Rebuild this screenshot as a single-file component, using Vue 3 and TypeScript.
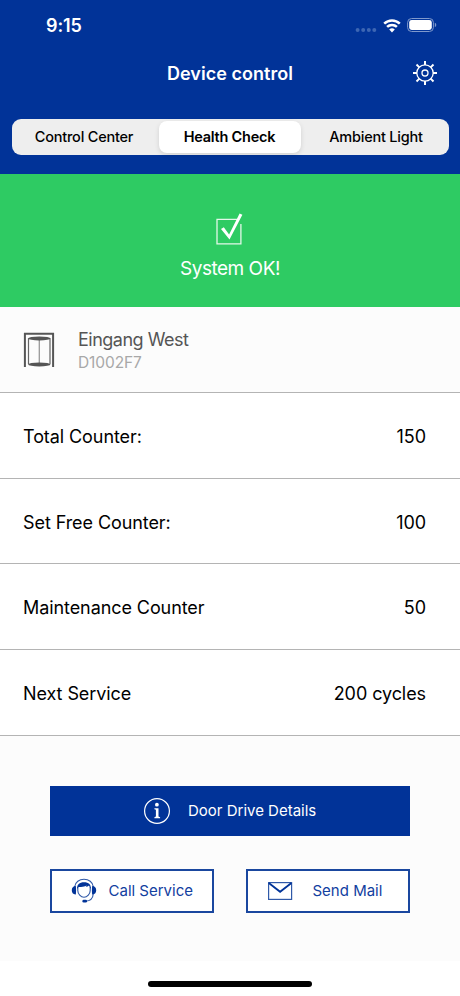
<script setup lang="ts">
import { ref } from 'vue'

interface Row {
  label: string
  value: string
}

const tabs: string[] = ['Control Center', 'Health Check', 'Ambient Light']
const active = ref<number>(1)

const rows: Row[] = [
  { label: 'Total Counter:', value: '150' },
  { label: 'Set Free Counter:', value: '100' },
  { label: 'Maintenance Counter', value: '50' },
  { label: 'Next Service', value: '200 cycles' },
]

const teeth: number[] = [0, 45, 90, 135, 180, 225, 270, 315]
</script>

<template>
  <div class="screen">
    <header class="header">
      <div class="status">
        <span class="time">9:15</span>
        <div class="indicators">
          <svg class="dots" width="22" height="6" viewBox="0 0 22 6">
            <circle cx="2.6" cy="3" r="2" />
            <circle cx="8.2" cy="3" r="2" />
            <circle cx="13.8" cy="3" r="2" />
            <circle cx="19.3" cy="3" r="2" />
          </svg>
          <svg class="wifi" width="18" height="14" viewBox="0 0 18 14">
            <path d="M1.2 4.6 A11.2 11.2 0 0 1 16.8 4.6" />
            <path d="M4.1 7.9 A7 7 0 0 1 13.9 7.9" />
            <path class="solid" d="M9 13.4 L6.2 10.5 A4 4 0 0 1 11.8 10.5 Z" />
          </svg>
          <svg class="battery" width="30" height="15" viewBox="0 0 30 15">
            <rect class="shell" x="0.6" y="0.5" width="25.8" height="13" rx="4" />
            <rect class="charge" x="2.2" y="2.1" width="22.6" height="9.8" rx="2.4" />
            <path class="cap" d="M27.8 4.8 Q29.3 5.4 29.3 7 Q29.3 8.6 27.8 9.2 Z" />
          </svg>
        </div>
      </div>
      <div class="titlebar">
        <h1 class="title">Device control</h1>
        <svg class="gear" width="26" height="26" viewBox="-13 -13 26 26">
          <circle r="8.2" />
          <circle r="3" />
          <path v-for="a in teeth" :key="a" d="M0 -8 V-12" :transform="`rotate(${a})`" />
        </svg>
      </div>
      <nav class="segments">
        <button
          v-for="(tab, i) in tabs"
          :key="tab"
          class="segment"
          :class="{ selected: i === active }"
          @click="active = i"
        >
          {{ tab }}
        </button>
      </nav>
    </header>

    <section class="banner">
      <svg class="check" width="28" height="34" viewBox="0 0 28 34">
        <path class="box" d="M22.3 7.4 H2 V31.8 H25.9 V12" />
        <path class="tick" d="M6 17 L8.8 15.2 L14.1 22.4 L24.6 1.6 L27.4 2.8 L14.5 27.6 Z" />
      </svg>
      <span class="banner-text">System OK!</span>
    </section>

    <section class="device">
      <svg class="door" width="32" height="36" viewBox="0 0 32 36">
        <path class="frame" d="M1.9 35 V1.8 H30.1 V35" />
        <path class="leaf" d="M5.5 6.2 V32 M27 6.2 V32" />
        <path class="center" d="M16.3 6.5 V32" />
        <ellipse cx="16.3" cy="6.4" rx="11.2" ry="2" />
        <ellipse cx="16.3" cy="32.4" rx="11.2" ry="2" />
      </svg>
      <div class="device-info">
        <span class="device-name">Eingang West</span>
        <span class="device-id">D1002F7</span>
      </div>
    </section>

    <div v-for="row in rows" :key="row.label" class="row">
      <span>{{ row.label }}</span>
      <span>{{ row.value }}</span>
    </div>

    <section class="actions">
      <button class="primary">
        <svg width="28" height="28" viewBox="0 0 28 28">
          <circle class="ring" cx="14" cy="14" r="12.4" />
          <circle class="glyph" cx="13.9" cy="7.7" r="1.9" />
          <path class="glyph" d="M11.4 11.2 H15.5 V19.6 L17.1 20.2 V21.3 H11.4 V20.2 L12.9 19.6 V12.8 L11.4 12.3 Z" />
        </svg>
        <span>Door Drive Details</span>
      </button>
      <div class="pair">
        <button class="secondary call">
          <svg width="26" height="26" viewBox="0 0 26 26">
            <path class="line" d="M3.6 9 C4.5 -1.3 21.5 -1.3 22.4 9" />
            <path class="line" d="M22.3 15.5 C22 20.5 19.5 23 14.5 23.2" />
            <path class="line" d="M6.8 9 V12.5 C6.8 16 9.8 19.2 13 19.2 C16.2 19.2 19.2 16 19.2 12.5 V9" />
            <path class="fill" d="M4.8 8 C5.2 10.5 5.2 14 4.8 16.4 C2 16.6 0.8 14.4 0.8 12.2 C0.8 9.8 2.2 8 4.8 8 Z M21.2 8 C20.8 10.5 20.8 14 21.2 16.4 C24 16.6 25.2 14.4 25.2 12.2 C25.2 9.8 23.8 8 21.2 8 Z" />
            <path class="fill" d="M6.3 11 C5.6 6.5 8.6 4.2 13 4.2 C17.6 4.2 20.5 6.5 19.6 11 L18 7.4 Q16.8 8.8 14.6 8.8 L15.8 7.6 Q12.5 9.6 7.5 8.9 Z" />
            <rect class="fill" x="11.4" y="21.7" width="4.6" height="2.8" rx="1.3" />
          </svg>
          <span>Call Service</span>
        </button>
        <button class="secondary mail">
          <svg width="26" height="20" viewBox="0 0 26 20">
            <rect class="envelope" x="1.6" y="1.6" width="23" height="16.8" />
            <path class="flap" d="M1.8 2 L13.1 10.8 L24.4 2" />
          </svg>
          <span>Send Mail</span>
        </button>
      </div>
    </section>

    <footer class="home"><span class="handle"></span></footer>
  </div>
</template>

<style>
body {
  margin: 0;
  background: #fff;
}
</style>

<style scoped>
.screen {
  width: 460px;
  height: 996px;
  display: flex;
  flex-direction: column;
  overflow: hidden;
  background: #fcfcfc;
  font-family: Inter, "Liberation Sans", sans-serif;
  color: #000;
}
.screen * {
  box-sizing: border-box;
}
svg {
  display: block;
  flex: none;
}
button {
  border: 0;
  padding: 0;
  margin: 0;
  background: none;
  font: inherit;
  color: inherit;
}
.header {
  flex: none;
  height: 174px;
  background: #013398;
  color: #fff;
}
.status {
  height: 51px;
  padding: 0 23.5px 0 46px;
  display: flex;
  align-items: center;
  justify-content: space-between;
}
.time {
  font-size: 18px;
  font-weight: 600;
  letter-spacing: -0.1px;
}
.indicators {
  display: flex;
  align-items: center;
}
.dots {
  margin: 8px 6px 0 0;
  fill: #3d66b3;
}
.wifi {
  margin-right: 6px;
  fill: none;
  stroke: #fff;
  stroke-width: 2.5;
}
.wifi .solid {
  fill: #fff;
  stroke: none;
}
.shell {
  fill: none;
  stroke: #7f99cc;
  stroke-width: 1;
}
.charge {
  fill: #fff;
}
.cap {
  fill: #7f99cc;
}
.titlebar {
  height: 44px;
  padding: 0 22px 0 48px;
  display: flex;
  align-items: center;
}
.title {
  flex: 1;
  margin: 0;
  padding-top: 1px;
  text-align: center;
  font-size: 18px;
  line-height: 24px;
  font-weight: 600;
  letter-spacing: 0.05px;
}
.gear {
  fill: none;
  stroke: #fff;
  stroke-width: 1.3;
}
.gear path {
  stroke-width: 2;
}
.segments {
  margin: 24px 11.5px 0;
  height: 35.5px;
  padding: 2px;
  display: grid;
  grid-template-columns: 145px 142px 1fr;
  border-radius: 9px;
  background: #eee;
}
.segment {
  font-size: 14.5px;
  font-weight: 500;
  letter-spacing: -0.22px;
  color: #000;
  border-radius: 8px;
  white-space: nowrap;
}
.segment:first-child {
  padding-right: 4px;
}
.segment:last-child {
  padding-left: 5px;
}
.segment.selected {
  background: #fff;
  font-weight: 600;
  box-shadow: 0 2px 5px rgba(0, 0, 0, 0.12);
}
.banner {
  flex: none;
  height: 133px;
  padding-top: 38px;
  display: flex;
  flex-direction: column;
  align-items: center;
  background: #2ecb63;
  color: #fff;
}
.check {
  margin-right: 2px;
}
.box {
  fill: none;
  stroke: #e3f8e9;
  stroke-width: 1.3;
}
.tick {
  fill: #fff;
}
.banner-text {
  margin-top: 10px;
  font-size: 19px;
  line-height: 26px;
  letter-spacing: -0.5px;
}
.device {
  flex: none;
  height: 86px;
  padding: 0 23px;
  display: flex;
  align-items: center;
  border-bottom: 1px solid #b4b4b4;
}
.door {
  fill: #555;
  stroke: none;
}
.frame {
  fill: none;
  stroke: #555;
  stroke-width: 2;
}
.leaf {
  fill: none;
  stroke: #666;
  stroke-width: 1.2;
}
.center {
  fill: none;
  stroke: #999;
  stroke-width: 1.3;
}
.device-info {
  margin-left: 23px;
  padding-top: 2px;
  display: flex;
  flex-direction: column;
}
.device-name {
  font-size: 18px;
  line-height: 24px;
  letter-spacing: -0.5px;
  color: #555;
}
.device-id {
  font-size: 15.5px;
  line-height: 22px;
  letter-spacing: -0.1px;
  color: #a8a8a8;
}
.row {
  flex: none;
  height: 85.7px;
  padding: 2px 34px 0 23px;
  display: flex;
  align-items: center;
  justify-content: space-between;
  border-bottom: 1px solid #b4b4b4;
  background: #fff;
  font-size: 18px;
  letter-spacing: -0.08px;
}
.actions {
  flex: 1;
  padding: 50px 50px 0;
}
.primary {
  width: 360px;
  height: 50px;
  display: flex;
  align-items: center;
  padding-left: 93px;
  background: #013398;
  color: #fff;
  font-size: 15px;
}
.primary span {
  margin-left: 17px;
}
.ring {
  fill: none;
  stroke: #fff;
  stroke-width: 1.2;
}
.glyph {
  fill: #fff;
}
.pair {
  margin-top: 33px;
  display: flex;
  justify-content: space-between;
}
.secondary {
  width: 164px;
  height: 44px;
  display: flex;
  align-items: center;
  border: 2px solid #1a479f;
  background: #fff;
  color: #12409f;
  font-size: 15px;
}
.call {
  padding-left: 18.5px;
}
.call span {
  margin-left: 12px;
}
.mail {
  padding-left: 18.5px;
}
.mail span {
  margin-left: 20px;
}
.line {
  fill: none;
  stroke: #3059a8;
  stroke-width: 1.1;
}
.fill {
  fill: #013398;
}
.envelope {
  fill: none;
  stroke: #3059a8;
  stroke-width: 1.2;
}
.flap {
  fill: none;
  stroke: #013398;
  stroke-width: 1.8;
}
.home {
  flex: none;
  height: 35px;
  padding-top: 20px;
  display: flex;
  justify-content: center;
  background: #fff;
}
.handle {
  width: 164px;
  height: 6px;
  border-radius: 3px;
  background: #000;
}
</style>
